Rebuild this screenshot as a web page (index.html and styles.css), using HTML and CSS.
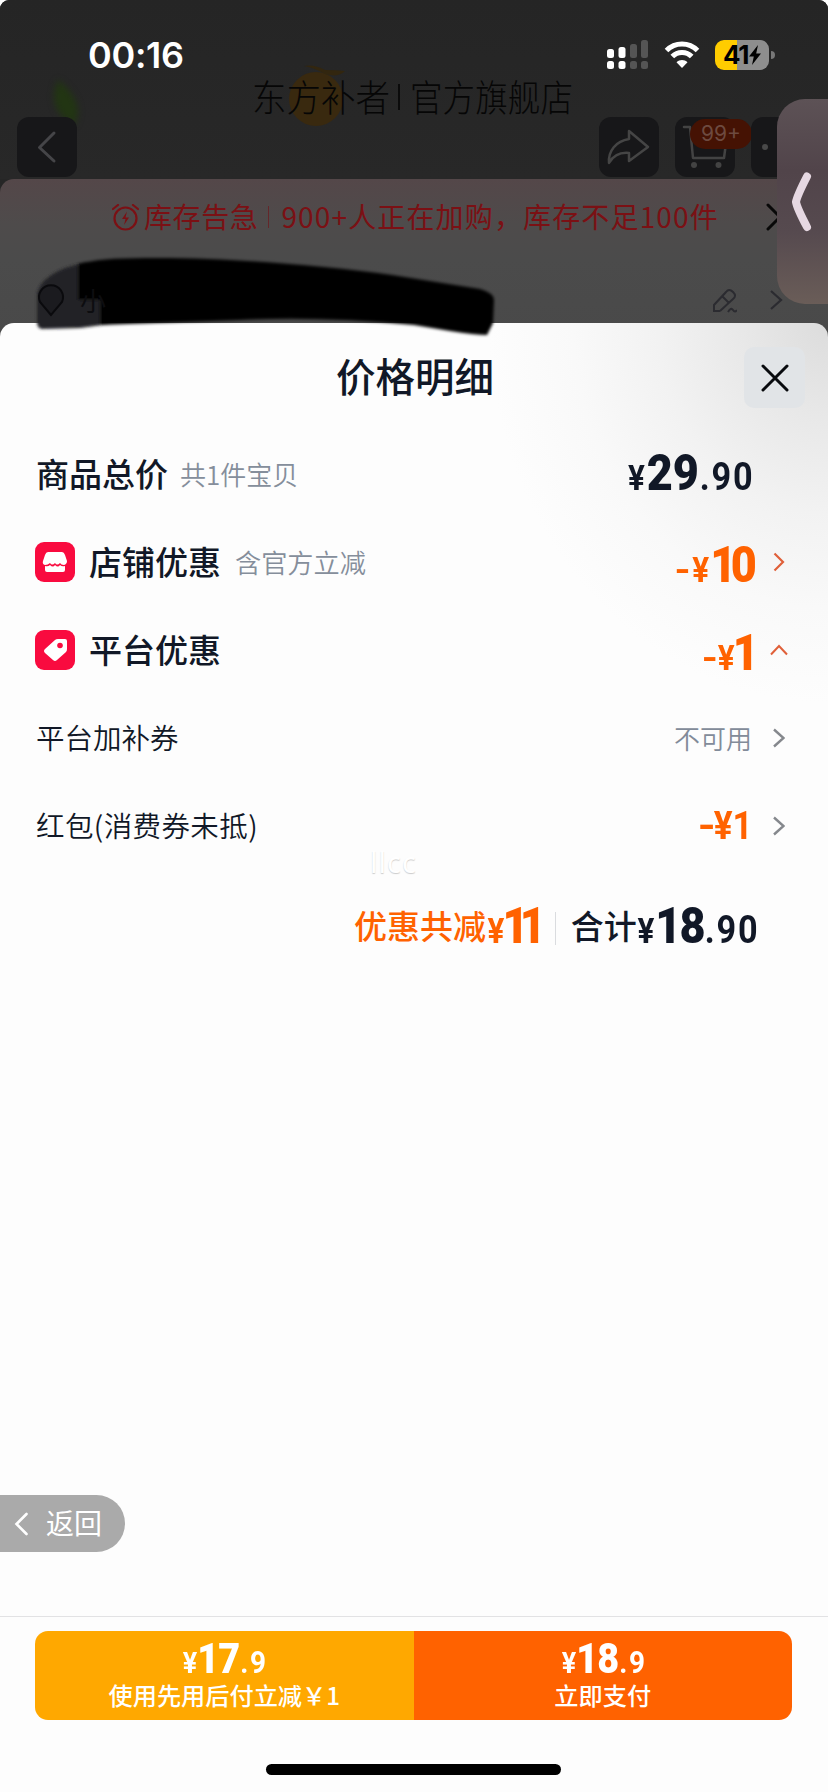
FILE: index.html
```html
<!DOCTYPE html>
<html lang="zh-CN">
<head>
<meta charset="utf-8">
<title>价格明细</title>
<link rel="stylesheet" href="styles.css">
</head>
<body>
<div class="screen">
  <div class="backdrop">
    <header class="store">
      <div class="statusbar">
        <span class="time">00:16</span>
        <div class="indicators">
          <svg class="signal" width="42" height="30" viewBox="0 0 42 30">
            <g fill="#fff"><rect x="0" y="9" width="7" height="9" rx="2.5"/><rect x="11.500" y="7" width="7" height="11" rx="2.500"/><rect x="0" y="21" width="7" height="8" rx="2.500"/><rect x="11.500" y="21" width="7" height="8" rx="2.500"/></g>
            <g fill="#555"><rect x="23" y="4" width="7" height="14" rx="2.500"/><rect x="34" y="0" width="7" height="18" rx="2.500"/><rect x="23" y="21" width="7" height="8" rx="2.500"/><rect x="34" y="21" width="7" height="8" rx="2.500"/></g>
          </svg>
          <svg class="wifi" width="36" height="28" viewBox="0 0 36 28">
            <path d="M2.500 9.500C11 .8 25 .8 33.500 9.500M8.300 15.500C13.500 10 22.500 10 27.700 15.500" fill="none" stroke="#fff" stroke-width="5"/>
            <path d="M18 27L12.500 21.200C15.500 18.200 20.500 18.200 23.500 21.200Z" fill="#fff"/>
          </svg>
          <div class="battery"><span>41</span><svg width="12" height="20" viewBox="0 0 12 20"><path d="M9 0L0 11.500h4.800L3 20l9-11.500H7.200Z" fill="#000"/></svg></div>
        </div>
      </div>
      <svg class="brand" width="340" height="72" viewBox="0 0 340 72">
        <circle cx="66" cy="37" r="27" fill="#39290f"/>
        <path d="M54 4q10-2 21 4 11 0 20 1-7 7-20 3-10-6-21-8Z" fill="#32260f"/>
        <g class="brand-text">
          <text x="2" y="50" textLength="138" lengthAdjust="spacingAndGlyphs">东方补者</text>
          <path d="M149 22v26" stroke="#0b0b0b" stroke-width="2"/>
          <text x="160" y="50" textLength="163" lengthAdjust="spacingAndGlyphs">官方旗舰店</text>
        </g>
      </svg>
      <svg class="leaf" width="34" height="46" viewBox="0 0 34 46"><path d="M8 0C0 18 4 34 24 45 34 30 24 12 8 0Z" fill="#223513"/></svg>
      <nav class="store-nav">
        <span class="tile"><svg width="60" height="60" viewBox="0 0 60 60"><path d="M37 16L22.500 30.500 37 44" fill="none" stroke="#454548" stroke-width="3" stroke-linecap="round" stroke-linejoin="round"/></svg></span>
        <span class="tile push"><svg width="60" height="60" viewBox="0 0 60 60"><path d="M30 14L49 30 30 44V36C20 35 14 39 10 46 9 34 17 24 30 22Z" fill="none" stroke="#454545" stroke-width="2.500" stroke-linejoin="round"/></svg></span>
        <span class="tile"><svg width="60" height="60" viewBox="0 0 60 60"><path d="M9 10h6l3 31h31l2-15" fill="none" stroke="#434343" stroke-width="2.500" stroke-linejoin="round" stroke-linecap="round"/><circle cx="19" cy="48" r="3" fill="#434343"/><circle cx="43.500" cy="48" r="3" fill="#434343"/></svg><b class="badge">99+</b></span>
        <span class="tile"><svg width="60" height="60" viewBox="0 0 60 60"><circle cx="14" cy="30" r="3" fill="#494949"/></svg></span>
      </nav>
    </header>
    <section class="order">
      <div class="alert">
        <svg width="27" height="27" viewBox="0 0 27 27" fill="none" stroke="#7b1014" stroke-width="2.200"><circle cx="13.500" cy="14.500" r="11"/><path d="M1 5L6 1M21 1l5 4" stroke-linecap="round"/><path d="M15 7.500l-5 7.500h3.500L12 21l5-7.500h-3.500Z" fill="#7b1014" stroke="none"/></svg>
        <span class="alert-title">库存告急</span><i></i><span class="alert-msg">900+人正在加购，库存不足100件</span>
        <svg class="alert-arrow" width="16" height="28" viewBox="0 0 16 28"><path d="M2 2l12 12L2 26" fill="none" stroke="#080808" stroke-width="3" stroke-linecap="round"/></svg>
      </div>
      <div class="address">
        <svg width="25" height="26" viewBox="0 0 25 26"><path d="M8 23H2V17L14 4q3-4 7 0t0 7L8 23M10 8l7 7M16 24q3-5 5-2t4 0" fill="none" stroke="#2b2b30" stroke-width="2"/></svg>
        <svg width="14" height="20" viewBox="0 0 14 20"><path d="M2 1l10 9L2 19" fill="none" stroke="#2b2b30" stroke-width="2.200"/></svg>
      </div>
    </section>
  </div>

  <main class="sheet">
    <div class="sheet-head">
      <h1>价格明细</h1>
      <button class="close"><svg width="28" height="28" viewBox="0 0 28 28"><path d="M2 2l24 24M26 2L2 26" stroke="#080a0e" stroke-width="3" stroke-linecap="round"/></svg></button>
    </div>
    <div class="row">
      <span class="label">商品总价</span><span class="note">共1件宝贝</span>
      <span class="price total">¥<b>29</b><em>.90</em></span>
    </div>
    <div class="row">
      <span class="icon"><svg width="40" height="40" viewBox="0 0 40 40"><path d="M13 10h14q2 0 3 3l2 6q0 3-3 4-3 0-4-2-3 3-5 0-3 3-5 0-2 2-5 2-3-1-2-4l2-6q1-3 3-3Z" fill="#fff"/><path d="M10 24q3 1 5-1 3 3 5 0 3 3 5 0 2 2 5 1v4q0 2-2 2H12q-2 0-2-2Z" fill="#fff"/></svg></span>
      <span class="label">店铺优惠</span><span class="note">含官方立减</span>
      <span class="price save"><s>-</s>¥<b>10</b></span>
      <svg class="chev" width="12" height="20" viewBox="0 0 12 20"><path d="M1.500 1.500L10 10 1.500 18.500" fill="none" stroke="#e0603a" stroke-width="2.200"/></svg>
    </div>
    <div class="row">
      <span class="icon"><svg width="40" height="40" viewBox="0 0 40 40"><path d="M20 10q1-1 3-1l7 0q2 0 2 2v8q0 2-1 3l-9 8q-2 2-4 0l-8-7q-2-2 0-4Z" fill="#fff"/><circle cx="25" cy="15.500" r="2.800" fill="#f90b3f"/></svg></span>
      <span class="label">平台优惠</span>
      <span class="price save one"><s>-</s>¥<b>1</b></span>
      <svg class="chev up" width="18" height="12" viewBox="0 0 18 12"><path d="M1 10.500L9 2l8 8.500" fill="none" stroke="#e0603a" stroke-width="2"/></svg>
    </div>
    <div class="row sub">
      <span class="label">平台加补券</span>
      <span class="unavailable">不可用</span>
      <svg class="chev" width="12" height="20" viewBox="0 0 12 20"><path d="M1 1.500L10.500 10 1 18.500" fill="none" stroke="#85888d" stroke-width="2.400"/></svg>
    </div>
    <div class="row sub">
      <span class="label packet-label">红包(消费券未抵)</span>
      <span class="price packet"><s>-</s>¥1</span>
      <svg class="chev" width="12" height="20" viewBox="0 0 12 20"><path d="M1 1.500L10.500 10 1 18.500" fill="none" stroke="#85888d" stroke-width="2.400"/></svg>
    </div>
    <div class="summary">
      <span class="label saved">优惠共减</span><span class="price saved cut">¥<b>11</b></span>
      <i></i>
      <span class="label">合计</span><span class="price sum">¥<b>18</b><em>.90</em></span>
    </div>
    <div class="watermark">llcc</div>
    <a class="return"><svg width="15" height="24" viewBox="0 0 15 24"><path d="M12.500 2L2.500 12l10 10" fill="none" stroke="#fff" stroke-width="2.600" stroke-linecap="round"/></svg><span>返回</span></a>
    <footer class="paybar">
      <div class="buttons">
        <button class="pay later"><span class="price">¥<b>17</b><em>.9</em></span><span class="caption">使用先用后付立减￥1</span></button>
        <button class="pay now"><span class="price">¥<b>18</b><em>.9</em></span><span class="caption">立即支付</span></button>
      </div>
      <div class="home"></div>
    </footer>
  </main>

  <svg class="brush" width="480" height="100" viewBox="0 0 480 100">
    <defs><filter id="soft"><feGaussianBlur stdDeviation="1.500"/></filter></defs>
    <g filter="url(#soft)">
      <path d="M17 54Q20 38 45 28L62 23 90 20V84L60 88 22 89Q17 88 17 82Z" fill="#222226"/>
      <path d="M58 24Q80 18 125 18C200 17 300 25 372 35L460 49Q474 53 474 60L473 83 467 95Q455 95 430 91L394 85Q300 76 220 80L80 85V60H58Z" fill="#010106"/>
    </g>
    <path d="M31 75L20 62A12 12 0 1 1 42 62Z" fill="#1b1b1f" stroke="#0a0a0d" stroke-width="2"/>
    <text x="60" y="71" class="masked">小</text>
  </svg>
  <div class="drawer"><svg width="20" height="60" viewBox="0 0 20 60"><path d="M15 4.500Q5 24 4 30 5 36 15 55" fill="none" stroke="#e6d8e2" stroke-width="8" stroke-linecap="round" stroke-linejoin="round"/></svg></div>
</div>
</body>
</html>
```

FILE: styles.css
```css
* { box-sizing: border-box; }
body { margin: 0; background: #fff; font-family: "Noto Sans CJK SC", sans-serif; }
h1, button { margin: 0; padding: 0; border: 0; font: inherit; }
i, em { font-style: normal; }
s { text-decoration: none; display: inline-block; transform: scaleX(1.3); }
svg { display: block; flex: none; }
.screen { position: relative; width: 828px; height: 1792px; overflow: hidden; display: flex; flex-direction: column; }

/* dimmed page behind the sheet */
.backdrop { height: 345px; flex: none; border-radius: 9px 9px 0 0; overflow: hidden; background: #262626; }
.store { height: 179px; position: relative; background: linear-gradient(#252525, #282828); }
.statusbar { height: 110px; padding: 0 54px 0 88px; display: flex; align-items: center; justify-content: space-between; }
.time { color: #fff; font: 600 36px/40px Inter, sans-serif; letter-spacing: -.3px; }
.indicators { display: flex; align-items: center; }
.wifi { margin: 0 15px 0 15px; }
.battery { position: relative; width: 54px; height: 30px; border-radius: 9px; background: linear-gradient(90deg, #fc0 41%, #8e8e8e 41%); display: flex; align-items: center; justify-content: center; gap: 1px; margin-right: 5px; }
.battery span { font: 700 26px/30px Inter, sans-serif; letter-spacing: -1.3px; color: #000; }
.battery::after { content: ""; position: absolute; right: -6px; top: 11px; width: 4px; height: 8px; border-radius: 0 4px 4px 0; background: #777; }
.brand { position: absolute; left: 250px; top: 62px; overflow: visible; }
.brand-text text { font: 300 37px "Noto Sans CJK SC", sans-serif; fill: #060606; }
.leaf { position: absolute; left: 50px; top: 80px; filter: blur(3px); }
.store-nav { display: flex; gap: 16px; margin: 7px -20px 0 17px; position: relative; }
.tile { width: 60px; height: 60px; flex: none; border-radius: 12px; background: #171719; position: relative; }
.tile.push { margin-left: 506px; }
.badge { position: absolute; left: 15px; top: 2px; width: 62px; height: 30px; border-radius: 15px; background: #451203; color: #6d4a40; font: 400 21px/30px Inter, sans-serif; text-align: center; }
.order { height: 166px; border-radius: 14px 14px 0 0; background: linear-gradient(#544749, #4e4b4b 45px, #4b4b4b 80px, #494949); }
.alert { height: 76px; display: flex; align-items: center; padding-left: 112px; color: #7b1014; font-size: 28px; line-height: 40px; }
.alert span { padding-bottom: 3px; white-space: nowrap; }
.alert-title { margin-left: 5px; letter-spacing: .6px; }
.alert i { width: 1px; height: 22px; background: #64262a; margin: 0 12px 0 10px; }
.alert-msg { letter-spacing: 1.15px; }
.alert-arrow { margin-left: 47px; }
.address { height: 90px; padding: 33px 45px 0 0; display: flex; justify-content: flex-end; gap: 32px; }
.address svg:last-child { margin-top: 2px; }

/* price sheet */
.sheet { height: 1469px; margin-top: -22px; flex: none; position: relative; border-radius: 14px 14px 0 0; background: radial-gradient(ellipse 340px 380px at 100% 0, #dcdcdc, #e8e8e8 25%, #f2f2f2 50%, #f9f9f9 75%, #fdfdfd) #fdfdfd; color: #111827; display: flex; flex-direction: column; }
.sheet-head { height: 107px; display: flex; justify-content: center; align-items: center; position: relative; }
h1 { font-size: 39.500px; font-weight: 500; line-height: 56px; padding: 0 0 3px 2px; }
.close { position: absolute; right: 23px; top: 24px; width: 61px; height: 61px; border-radius: 10px; background: #e1e4e7; display: flex; align-items: center; justify-content: center; }
.row { height: 88px; flex: none; display: flex; align-items: center; padding: 0 43px 0 36px; }
.label { font-size: 33px; font-weight: 500; line-height: 48px; padding-bottom: 3px; white-space: nowrap; }
.note { margin-left: 14px; font-size: 26.200px; line-height: 40px; color: #858e9b; font-weight: 350; }
.label:first-child + .note { margin-left: 12px; font-size: 26px; }
.icon { width: 40px; height: 40px; margin: 0 14px 0 -1px; border-radius: 9px; background: #f90b3f; flex: none; }
.price { font: 700 35px/56px Roboto, sans-serif; white-space: nowrap; display: inline-block; transform: scaleX(.9); transform-origin: right; }
.price b { font-size: 50px; margin-left: 2px; }
.price em { font-size: 38px; font-weight: 700; letter-spacing: 2px; margin-left: 1px; }
.row .price { margin-left: auto; color: #ff6200; }
.row .total { margin-right: 31px; padding-top: 4px; color: #111827; }
.row .save { margin-right: 21px; padding-top: 11px; }
.save b { letter-spacing: -6px; margin-left: 1px; }
.save s { margin-right: 4px; }
.row .one { margin-right: 19px; }
.one b { margin-left: -2px; }
.one s { margin-right: 2px; }
.chev.up { margin: 0 -3px 0 -3px; }
.sub .label { font-size: 28.500px; font-weight: 350; }
.sub .packet-label { letter-spacing: .4px; }
.unavailable { margin-left: auto; margin-right: 21px; font-size: 26px; font-weight: 350; color: #828b99; padding-bottom: 2px; }
.sub .packet { font-size: 39px; margin-right: 20px; }
.summary { height: 112px; display: flex; align-items: center; justify-content: flex-end; padding-right: 69px; }
.summary .price { padding-top: 6px; }
.summary i { width: 1px; height: 33px; background: #dadcdf; margin: 4px 15px 0 16px; }
.saved { color: #ff6200; }
.cut { margin: 0 2px 0 -4px; }
.cut b { letter-spacing: -10px; margin-left: -2px; }
.sum { margin-left: -13px; }
.sum b { letter-spacing: -2px; margin-left: 1px; }
.watermark { position: absolute; left: 370px; top: 519px; font: 400 29px/40px "Noto Sans", sans-serif; color: #fff; text-shadow: 0 1px 1px #ccc; letter-spacing: 1px; }
.return { margin-top: auto; width: 125px; height: 57px; border-radius: 0 29px 29px 0; background: #aaa; color: #fff; display: flex; align-items: center; padding-left: 14px; gap: 17px; font-size: 28px; line-height: 40px; margin-bottom: 64px; }
.return span { padding-bottom: 3px; }
.paybar { height: 176px; flex: none; border-top: 1px solid #e2e2e4; padding: 14px 36px 0 35px; }
.buttons { height: 89px; display: flex; border-radius: 13px; overflow: hidden; }
.pay { flex: 1; display: flex; flex-direction: column; align-items: center; color: #fff; }
.later { background: #ffa800; }
.now { background: #ff6200; }
.pay .price { font-size: 30px; line-height: 34px; height: 44px; padding-top: 11px; transform-origin: center; margin-left: 3px; }
.pay .price b { font-size: 42px; line-height: 34px; margin-left: 0; letter-spacing: -1px; }
.pay .price em { font-size: 31px; }
.caption { font-size: 24.200px; font-weight: 500; line-height: 40px; }
.home { width: 295px; height: 11px; border-radius: 6px; background: #000; margin: 44px auto 0; }

/* overlays on top of everything */
.brush { position: absolute; left: 20px; top: 240px; }
.masked { font-size: 26px; fill: #0d0d10; }
.drawer { position: absolute; right: 0; top: 99px; width: 51px; height: 205px; border-radius: 28px 0 0 28px; background: linear-gradient(#5d5256, #51444a 35%, #564a4f 65%, #6a5d58); padding: 73px 0 0 15px; }
```
